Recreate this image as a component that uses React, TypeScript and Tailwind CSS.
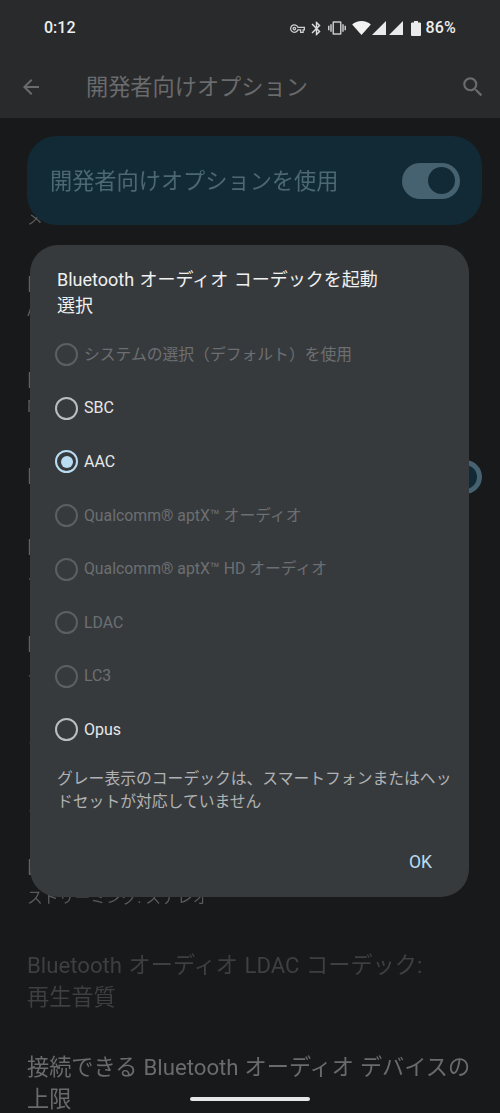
import React from "react";
import { MdArrowBack, MdSearch, MdOutlineVpnKey, MdBluetooth, MdVibration } from "react-icons/md";

const font = { fontFamily: '"Roboto", "Noto Sans CJK JP", sans-serif' };

type Row = { title: string; sub?: string; top: string; subTop?: string; switchOn?: boolean };

// Only the first glyph of most of these rows shows beside the dialog.
const rows: Row[] = [
  { title: "B", sub: "A", top: "mt-[40px]" },
  { title: "B", sub: "M", top: "mt-[44px]" },
  { title: "B", top: "mt-[44px]", switchOn: true },
  { title: "B", sub: "ス", top: "mt-[41px]" },
  { title: "B", sub: "ス", top: "mt-[45px]" },
  { title: "ス", top: "mt-[39px]" },
  { title: "ス", top: "mt-[38px]" },
  { title: "B", sub: "ストリーミング: ステレオ", top: "mt-[34px]", subTop: "mt-[4px]" },
];

const options = [
  { label: "システムの選択（デフォルト）を使用", state: "off" },
  { label: "SBC", state: "on" },
  { label: "AAC", state: "sel" },
  { label: "Qualcomm® aptX™ オーディオ", state: "off" },
  { label: "Qualcomm® aptX™ HD オーディオ", state: "off" },
  { label: "LDAC", state: "off" },
  { label: "LC3", state: "off" },
  { label: "Opus", state: "on" },
];

function Radio({ state }: { state: string }) {
  if (state === "sel") {
    return (
      <span className="flex h-[23px] w-[23px] shrink-0 items-center justify-center rounded-full border-[2.5px] border-[#b9dcf3]">
        <span className="h-[12px] w-[12px] rounded-full bg-[#b9dcf3]" />
      </span>
    );
  }
  return (
    <span
      className={
        state === "on"
          ? "h-[23px] w-[23px] shrink-0 rounded-full border-[2.5px] border-[#bcbdbe]"
          : "h-[23px] w-[23px] shrink-0 rounded-full border-[2.5px] border-[#5c5f62]"
      }
    />
  );
}

function StatusBar() {
  return (
    <div className="flex h-[56px] items-center pl-[44px] pr-[44px] text-[#eeeeee]">
      <span className="text-[16px] font-medium leading-none">0:12</span>
      <div className="ml-auto flex items-center">
        <MdOutlineVpnKey className="h-[15px] w-[15px] text-[#cfcfcf]" />
        <MdBluetooth className="ml-[3px] h-[17px] w-[17px] text-[#dddddd]" />
        <MdVibration className="ml-[3px] h-[18px] w-[18px] text-[#c8c8c8]" />
        <svg viewBox="0 0 24 18" className="ml-[6px] h-[14px] w-[19px]" fill="#f2f2f2">
          <path d="M12 18 L0 4.5 C3 1.8 7.2 0 12 0 C16.8 0 21 1.8 24 4.5 Z" />
        </svg>
        <svg viewBox="0 0 14 14" className="ml-[1px] h-[14px] w-[14px]" fill="#eaeaea">
          <path d="M14 0 V14 H0 Z" />
        </svg>
        <svg viewBox="0 0 14 14" className="ml-[3px] h-[14px] w-[14px]" fill="#eaeaea">
          <path d="M14 0 V14 H0 Z" />
        </svg>
        <svg viewBox="0 0 10 15" className="ml-[8px] h-[15px] w-[10px]" fill="#eaeaea">
          <path d="M3 0 H7 V1.5 H9 A1 1 0 0 1 10 2.5 V14 A1 1 0 0 1 9 15 H1 A1 1 0 0 1 0 14 V2.5 A1 1 0 0 1 1 1.5 H3 Z" />
        </svg>
        <span className="ml-[4px] text-[16px] font-medium leading-none tracking-[0.2px]">86%</span>
      </div>
    </div>
  );
}

export default function App() {
  return (
    <div className="relative h-[1113px] w-[500px] overflow-hidden bg-[#18191a]" style={font}>
      <header className="h-[118px] bg-[#292a2c]">
        <StatusBar />
        <div className="flex h-[62px] items-center pl-[19px] pr-[14px] text-[#6a6b6d]">
          <MdArrowBack className="h-[24px] w-[24px]" />
          <h1 className="ml-[43px] text-[22.2px] font-normal leading-none">開発者向けオプション</h1>
          <MdSearch className="ml-auto h-[26px] w-[26px]" />
        </div>
      </header>

      <main className="pl-[27px] pr-[18px] [will-change:transform]">
        <div className="relative z-10 mt-[18px] flex h-[89px] w-[455px] items-center rounded-[30px] bg-[#122a35] pl-[23px] pr-[22px]">
          <span className="pt-[2px] text-[22.2px] leading-none text-[#4c6872]">開発者向けオプションを使用</span>
          <span className="ml-auto flex h-[36px] w-[58px] items-center justify-end rounded-full bg-[#466170] pr-[5px]">
            <span className="h-[27px] w-[27px] rounded-full bg-[#122a35]" />
          </span>
        </div>

        <p className="mt-[-17px] h-[22px] text-[16px] leading-[22px] text-[#5a5b5c]">メ</p>

        {rows.map((r, i) => (
          <div key={i} className={`relative ${r.top}`}>
            <p className="h-[30px] whitespace-nowrap text-[22px] leading-[30px] text-[#606162]">{r.title}</p>
            {r.sub && (
              <p className={`h-[22px] text-[15.8px] leading-[22px] text-[#58595a] ${r.subTop ?? ""}`}>{r.sub}</p>
            )}
            {r.switchOn && (
              <span className="absolute right-0 top-[-2px] flex h-[34px] w-[58px] items-center justify-end rounded-full bg-[#466170] pr-[5px]">
                <span className="h-[24px] w-[24px] rounded-full bg-[#122a35]" />
              </span>
            )}
          </div>
        ))}

        <div className="mt-[40px] w-[420px] text-[22.2px] leading-[32px] text-[#3e3f40] [word-spacing:1px]">
          Bluetooth オーディオ LDAC コーデック:
          <br />
          再生音質
        </div>
        <div className="mt-[38px] w-[450px] text-[22.2px] leading-[32px] text-[#6a6b6c] [word-spacing:0.5px]">
          接続できる Bluetooth オーディオ デバイスの上限
        </div>
      </main>

      <div
        role="dialog"
        className="absolute left-[30px] top-[245px] z-20 h-[652px] w-[439px] rounded-[28px] bg-[#373a3d]"
      >
        <h2 className="pl-[27px] pt-[22px] text-[18px] font-normal leading-[26px] text-[#eff0f0] [word-spacing:1px]">
          Bluetooth オーディオ コーデックを起動
          <br />
          選択
        </h2>
        <ul className="mt-[9px]">
          {options.map((o) => (
            <li key={o.label} className="flex h-[53.6px] items-center pl-[25px]">
              <Radio state={o.state} />
              <span
                className={
                  o.state === "off"
                    ? "ml-[6px] text-[15.8px] leading-none text-[#6c6f71]"
                    : "ml-[6px] text-[16px] leading-none text-[#e6e7e8]"
                }
              >
                {o.label}
              </span>
            </li>
          ))}
        </ul>
        <p className="mt-[10px] pl-[27px] pr-[10px] text-[15.8px] leading-[23px] text-[#b0b2b4]">
          グレー表示のコーデックは、スマートフォンまたはヘッドセットが対応していません
        </p>
        <div className="mt-[41px] flex justify-end pr-[37px]">
          <button className="text-[17.5px] font-normal leading-none text-[#b9dcf3]">OK</button>
        </div>
      </div>

      <div className="absolute bottom-[12px] left-[190px] z-30 h-[4px] w-[120px] rounded-full bg-[#e6e6e6]" />
    </div>
  );
}
